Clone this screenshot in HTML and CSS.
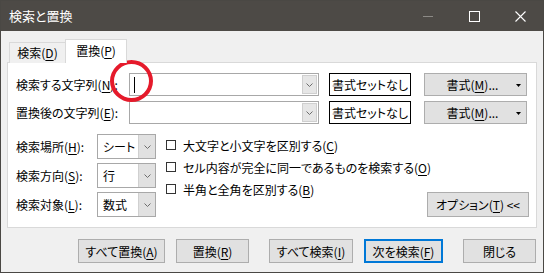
FILE: index.html
```html
<!DOCTYPE html>
<html lang="ja">
<head>
    <meta charset="UTF-8">
    <title>検索と置換</title>
    <link rel="stylesheet" href="styles.css">
</head>
<body>
    <div class="window">
        <div class="titlebar">
            <span class="title">検索と置換</span>
            <div class="controls">
                <span class="ctl"><span class="min"></span></span>
                <span class="ctl"><span class="max"></span></span>
                <span class="ctl">
                    <svg width="11" height="11" viewBox="0 0 11 11"><path d="M0.5 0.5 L10.5 10.5 M10.5 0.5 L0.5 10.5" stroke="#fff" stroke-width="1.1" fill="none"/></svg>
                </span>
            </div>
        </div>

        <div class="client">
            <div class="tabs">
                <div class="tab">検索(<u>D</u>)</div>
                <div class="tab active">置換(<u>P</u>)</div>
            </div>

            <div class="panel">
                <div class="find-row">
                    <label class="find-label">検索する文字列(<u>N</u>):</label>
                    <div class="combo">
                        <span class="text"><span class="caret"></span></span>
                        <span class="drop"><svg width="7" height="4" viewBox="0 0 7 4"><polyline points="0.5,0.5 3.5,3.5 6.5,0.5" fill="none" stroke="#6d6d6d"/></svg></span>
                    </div>
                    <button class="btn-none">書式セットなし</button>
                    <button class="btn btn-fmt">書式(<u>M</u>)...<svg class="tri" width="5" height="3" viewBox="0 0 5 3"><polygon points="0,0 5,0 2.5,3" fill="#000"/></svg></button>
                </div>
                <div class="find-row">
                    <label class="find-label">置換後の文字列(<u>E</u>):</label>
                    <div class="combo">
                        <span class="text"></span>
                        <span class="drop"><svg width="7" height="4" viewBox="0 0 7 4"><polyline points="0.5,0.5 3.5,3.5 6.5,0.5" fill="none" stroke="#6d6d6d"/></svg></span>
                    </div>
                    <button class="btn-none">書式セットなし</button>
                    <button class="btn btn-fmt">書式(<u>M</u>)...<svg class="tri" width="5" height="3" viewBox="0 0 5 3"><polygon points="0,0 5,0 2.5,3" fill="#000"/></svg></button>
                </div>

                <div class="options">
                    <div class="selects">
                        <div class="sel-row">
                            <label class="sel-label">検索場所(<u>H</u>):</label>
                            <div class="select"><span class="value">シート</span><span class="sel-drop"><svg width="7" height="4" viewBox="0 0 7 4"><polyline points="0.5,0.5 3.5,3.5 6.5,0.5" fill="none" stroke="#6d6d6d"/></svg></span></div>
                        </div>
                        <div class="sel-row">
                            <label class="sel-label">検索方向(<u>S</u>):</label>
                            <div class="select"><span class="value">行</span><span class="sel-drop"><svg width="7" height="4" viewBox="0 0 7 4"><polyline points="0.5,0.5 3.5,3.5 6.5,0.5" fill="none" stroke="#6d6d6d"/></svg></span></div>
                        </div>
                        <div class="sel-row">
                            <label class="sel-label">検索対象(<u>L</u>):</label>
                            <div class="select"><span class="value">数式</span><span class="sel-drop"><svg width="7" height="4" viewBox="0 0 7 4"><polyline points="0.5,0.5 3.5,3.5 6.5,0.5" fill="none" stroke="#6d6d6d"/></svg></span></div>
                        </div>
                    </div>

                    <div class="checks">
                        <div class="check-row">
                            <label class="check"><span class="box"></span>大文字と小文字を区別する(<u>C</u>)</label>
                        </div>
                        <div class="check-row">
                            <label class="check"><span class="box"></span>セル内容が完全に同一であるものを検索する(<u>O</u>)</label>
                        </div>
                        <div class="check-row last">
                            <label class="check"><span class="box"></span>半角と全角を区別する(<u>B</u>)</label>
                            <button class="btn btn-options">オプション(<u>T</u>) &lt;&lt;</button>
                        </div>
                    </div>
                </div>
            </div>

            <div class="actions">
                <button class="btn btn-act w87">すべて置換(<u>A</u>)</button>
                <button class="btn btn-act w73">置換(<u>R</u>)</button>
                <button class="btn btn-act w84 far">すべて検索(<u>I</u>)</button>
                <button class="btn btn-act w79 default">次を検索(<u>F</u>)</button>
                <button class="btn btn-act w73 far">閉じる</button>
            </div>
        </div>

        <!-- 入力欄の強調マーク -->
        <div class="mark"></div>
    </div>
</body>
</html>
```

FILE: styles.css
```css
* {
    margin: 0;
    padding: 0;
    box-sizing: border-box;
}

body {
    width: 544px;
    height: 273px;
    font-family: "Noto Sans CJK JP", "Noto Sans", sans-serif;
    font-size: 12px;
    font-feature-settings: "palt";
    color: #000;
    background: #4a4844;
    overflow: hidden;
}

u {
    text-decoration: underline;
    text-underline-offset: 2px;
}

.window {
    position: relative;
    width: 544px;
    height: 273px;
    border: 1px solid #4a4844;
    background: #f0f0f0;
    display: flex;
    flex-direction: column;
}

/* タイトルバー */
.titlebar {
    height: 30px;
    background: #4d4a46;
    display: flex;
    align-items: center;
    justify-content: space-between;
    color: #fff;
}

.title {
    padding-left: 8px;
    font-size: 13px;
    line-height: 30px;
}

.controls {
    display: flex;
    height: 100%;
}

.ctl {
    width: 46px;
    height: 100%;
    display: flex;
    align-items: center;
    justify-content: center;
}

.min {
    width: 10px;
    height: 1px;
    background: #8c8a86;
}

.max {
    width: 11px;
    height: 11px;
    border: 1px solid #fff;
}

/* クライアント領域 */
.client {
    flex: 1;
    padding: 8px 6px 0;
}

.tabs {
    display: flex;
    align-items: flex-end;
    padding-left: 2px;
    height: 24px;
    margin-bottom: -1px;
    position: relative;
    z-index: 1;
}

.tab {
    height: 21px;
    width: 57px;
    border: 1px solid #d9d9d9;
    border-bottom: 0;
    background: #f0f0f0;
    display: flex;
    align-items: center;
    justify-content: center;
    line-height: 1;
}

.tab.active {
    height: 24px;
    width: 62px;
    background: #fff;
    margin-left: -1px;
    padding-bottom: 2px;
}

.panel {
    height: 166px;
    background: #fff;
    border: 1px solid #d9d9d9;
    padding: 10px 7px 0 8px;
}

.find-row {
    display: flex;
    align-items: center;
    height: 23px;
    margin-bottom: 5px;
}

.find-label {
    width: 113px;
    white-space: nowrap;
}

.combo {
    width: 190px;
    height: 23px;
    border: 1px solid #a8a8a8;
    display: flex;
    padding: 1px;
    margin-right: 10px;
}

.combo .text {
    flex: 1;
    display: flex;
    align-items: center;
    padding-left: 3px;
}

.caret {
    width: 1px;
    height: 16px;
    background: #000;
}

.drop {
    width: 15px;
    background: #e6e6e6;
    border: 1px solid #cfcfcf;
    display: flex;
    align-items: center;
    justify-content: center;
}

.btn-none {
    width: 82px;
    height: 23px;
    border: 1px solid #000;
    background: #fff;
    font: inherit;
    font-feature-settings: "palt";
    margin-right: 13px;
}

.btn {
    background: #e1e1e1;
    border: 1px solid #adadad;
    font: inherit;
    font-feature-settings: "palt";
    color: #000;
    display: flex;
    align-items: center;
    justify-content: center;
    white-space: nowrap;
    flex-shrink: 0;
}

.btn-fmt {
    width: 103px;
    height: 23px;
    position: relative;
    padding-right: 6px;
}

.tri {
    position: absolute;
    right: 5px;
    top: 10px;
}

/* 検索オプション */
.options {
    display: flex;
    margin-top: 10px;
}

.selects {
    display: flex;
    flex-direction: column;
    gap: 4px;
}

.sel-row {
    display: flex;
    align-items: center;
    height: 25px;
}

.sel-label {
    width: 81px;
    white-space: nowrap;
}

.select {
    width: 59px;
    height: 25px;
    border: 1px solid #a8a8a8;
    display: flex;
}

.select .value {
    flex: 1;
    display: flex;
    align-items: center;
    padding-left: 5px;
}

.sel-drop {
    width: 17px;
    background: #e1e1e1;
    border-left: 1px solid #d0d0d0;
    display: flex;
    align-items: center;
    justify-content: center;
}

.checks {
    flex: 1;
    margin-left: 10px;
    display: flex;
    flex-direction: column;
}

.check-row {
    height: 22px;
    display: flex;
}

.check-row.last {
    justify-content: space-between;
    align-items: flex-start;
}

.check {
    display: flex;
    align-items: center;
    height: 22px;
    white-space: nowrap;
}

.box {
    width: 10px;
    height: 10px;
    border: 1px solid #333;
    background: #fff;
    margin-right: 7px;
}

.btn-options {
    width: 102px;
    height: 25px;
    margin-top: 14px;
}

/* 下部ボタン */
.actions {
    display: flex;
    margin-top: 11px;
    padding-left: 71px;
}

.btn-act {
    height: 24px;
    margin-right: 11px;
}

.btn-act:last-child {
    margin-right: 0;
}

.btn-act.far {
    margin-left: 9px;
}

.btn-act.default {
    border: 2px solid #0078d7;
}

.w87 { width: 87px; }
.w73 { width: 73px; }
.w84 { width: 84px; }
.w79 { width: 79px; }

.mark {
    position: absolute;
    left: 109px;
    top: 59px;
    width: 43px;
    height: 42px;
    border: 4px solid #e51a2b;
    border-radius: 50%;
}
```
